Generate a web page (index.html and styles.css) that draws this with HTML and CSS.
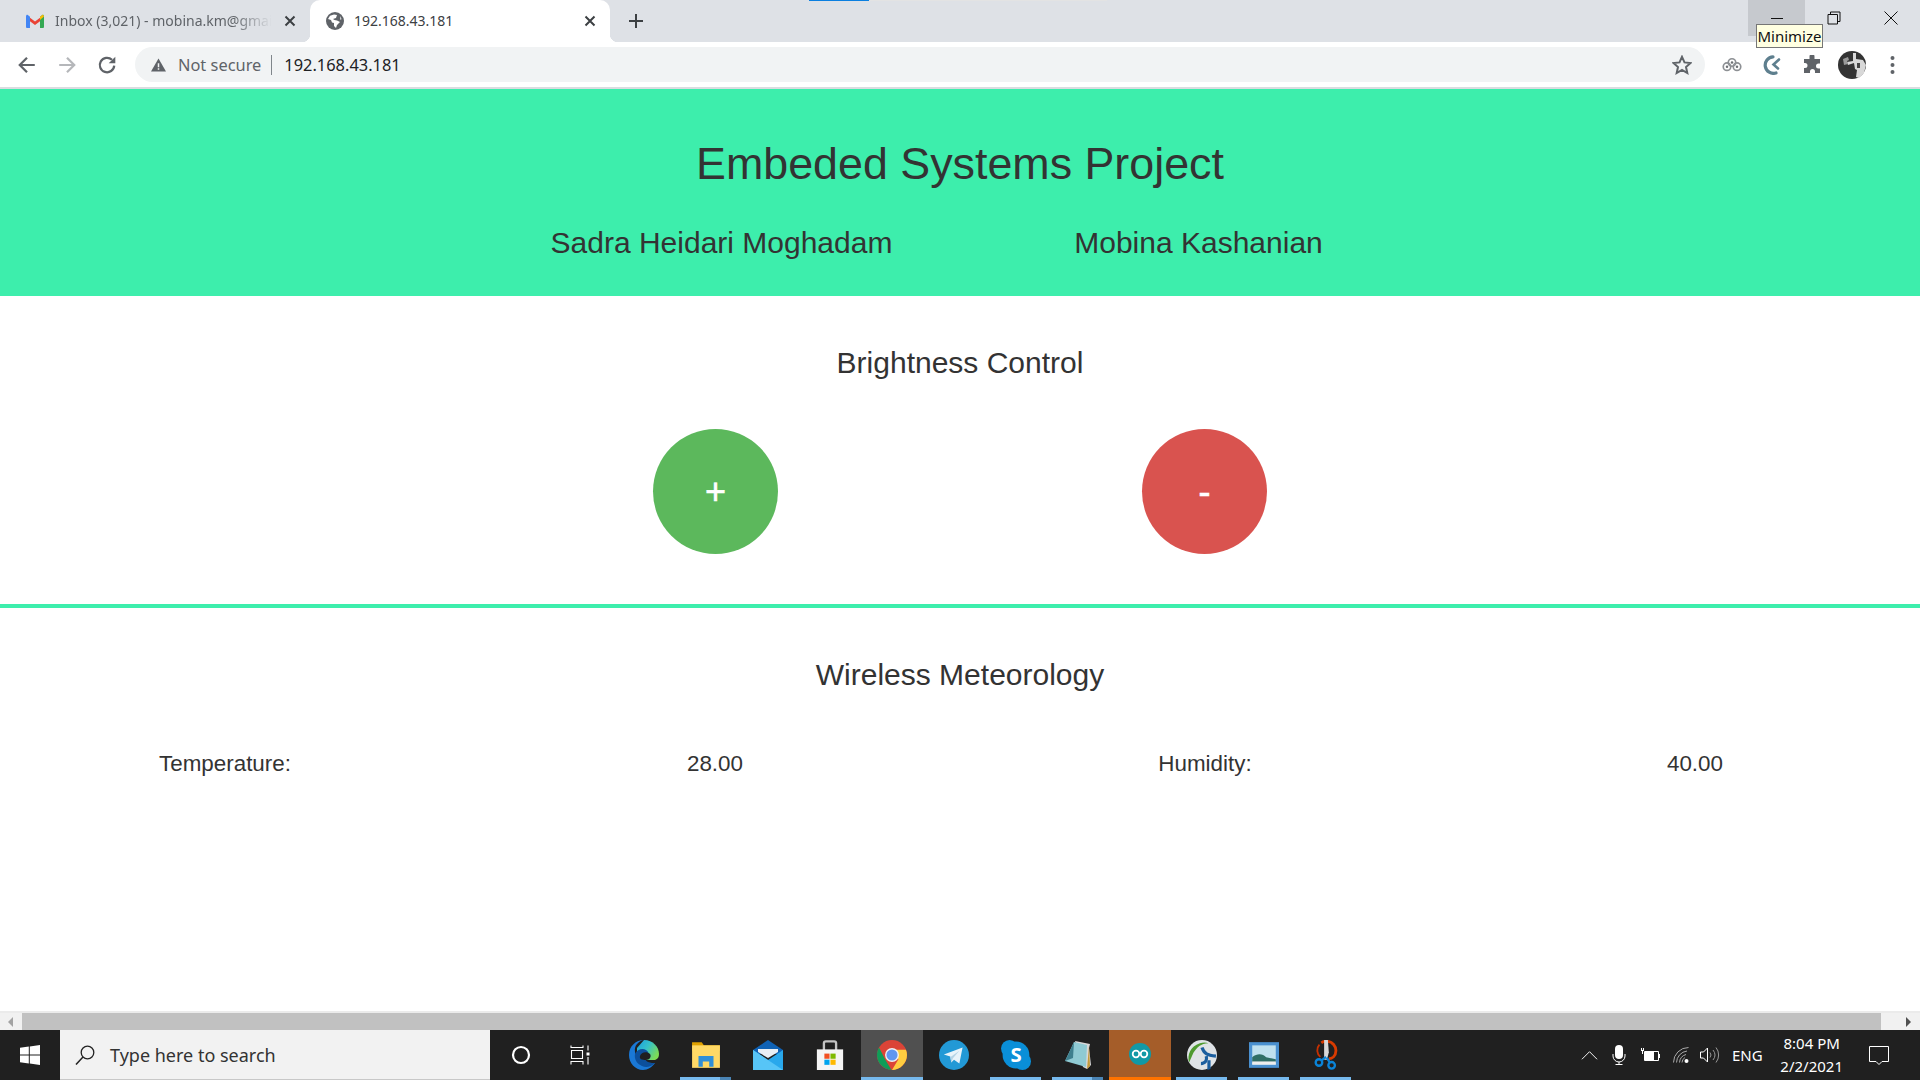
FILE: index.html
```html
<!DOCTYPE html>
<html lang="en">
<head>
    <meta charset="UTF-8">
    <title>192.168.43.181</title>
    <link rel="stylesheet" href="styles.css">
</head>
<body>
<div class="tabstrip">
    <div class="loadbar"><span></span></div>
    <div class="tab">
        <svg class="favicon" viewBox="0 0 18 14"><path fill="#ea4335" d="M1 1.500 9 7.500l8-6V5l-8 6-8-6z"/><path fill="#4285f4" d="M0 2.500C0 1 1 .5 1.500.8L4 2.700V14H1.300C.5 14 0 13.400 0 12.700z"/><path fill="#34a853" d="M14 2.700 16.500.8C17 .5 18 1 18 2.500v10.200c0 .7-.5 1.300-1.300 1.300H14z"/><path fill="#fbbc04" d="M14 2.700 17 .5 18 2.500 14 6z"/></svg>
        <span class="tab-title fade">Inbox (3,021) - mobina.km@gmail.com</span>
        <svg class="tab-x" viewBox="0 0 12 12"><path d="M1.500 1.500l9 9M10.500 1.500l-9 9"/></svg>
    </div>
    <div class="tab active">
        <svg class="favicon" viewBox="0 0 18 18"><circle cx="9" cy="9" r="9" fill="#5f6368"/><path fill="#fff" d="M8 2.500 4 3.800 2 7l3 1 1 2.500 2 .5V14l2 2 1-3 3-3-3-1.500-2.500-.5L7 7l3-1 1-3zM14 4l1.500 3-1 1z"/></svg>
        <span class="tab-title">192.168.43.181</span>
        <svg class="tab-x" viewBox="0 0 12 12"><path d="M1.500 1.500l9 9M10.500 1.500l-9 9"/></svg>
    </div>
    <svg class="newtab" viewBox="0 0 16 16"><path d="M8 1v14M1 8h14"/></svg>
    <div class="winctl">
        <div class="winbtn hover"><svg viewBox="0 0 14 14"><path d="M1 7.500h12"/></svg></div>
        <div class="winbtn"><svg viewBox="0 0 14 14"><path d="M1 3.500h9.500V13H1zM3.500 3.500V1H13v9.500h-2.500"/></svg></div>
        <div class="winbtn"><svg viewBox="0 0 14 14"><path d="M.5.500l13 13M13.500.500l-13 13"/></svg></div>
    </div>
    <div class="tooltip">Minimize</div>
</div>

<div class="toolbar">
    <div class="tool"><svg viewBox="0 0 18 18"><path class="st" d="M16 9H3M9 2.500 2.500 9 9 15.500"/></svg></div>
    <div class="tool dim"><svg viewBox="0 0 18 18"><path class="st" d="M2 9h13M9 2.500 15.500 9 9 15.500"/></svg></div>
    <div class="tool"><svg viewBox="0 0 18 18"><path class="st" d="M15.500 9.500A6.500 6.500 0 1 1 13.500 4.300"/><path fill="#5f6368" d="M16.500 1.500V7.500H10.500z"/></svg></div>
    <div class="omnibox">
        <svg class="warn" viewBox="0 0 16 14"><path fill="#5f6368" d="M8 0l8 14H0z"/><path fill="#f1f3f4" d="M7.200 5h1.600v4.500H7.200zM7.200 10.500h1.600V12H7.200z"/></svg>
        <span class="secure">Not secure</span>
        <span class="sep"></span>
        <span class="url">192.168.43.181</span>
        <svg class="star" viewBox="0 0 20 20"><path d="M10 1.800l2.500 5.600 6 .6-4.500 4 1.300 6L10 15l-5.300 3 1.300-6-4.500-4 6-.6z"/></svg>
    </div>
    <div class="tool"><svg viewBox="0 0 24 20"><g fill="none" stroke="#8d9094" stroke-width="2"><circle cx="6" cy="12" r="4.500"/><circle cx="12" cy="7" r="4.500"/><circle cx="18" cy="12" r="4.500"/></g><g fill="#6d7074"><circle cx="6" cy="12" r="1.500"/><circle cx="12" cy="7" r="1.500"/><circle cx="18" cy="12" r="1.500"/></g></svg></div>
    <div class="tool"><svg viewBox="0 0 20 20"><path fill="none" stroke="#5e7f8e" stroke-width="3.200" stroke-linecap="round" d="M11 1.800A8.300 8.300 0 1 0 14 18"/><path fill="none" stroke="#5e7f8e" stroke-width="2.600" stroke-linecap="round" d="M17 4.500 11.500 9.500 16 13.500"/></svg></div>
    <div class="tool"><svg viewBox="0 0 20 20"><path fill="#5f6368" d="M7.500 1.500a2.500 2.500 0 0 1 5 0V4H18v4.500h-1.500a2.500 2.500 0 0 0 0 5H18V18h-5v-1.500a2.500 2.500 0 0 0-5 0V18H2v-5h1a2.500 2.500 0 0 0 0-5H2V4h5.500z"/></svg></div>
    <div class="tool"><svg class="avatar" viewBox="0 0 28 28"><circle cx="14" cy="14" r="14" fill="#333"/><path fill="#d8d8d8" d="M15 2h3v6l7 1 3 5-2 8-5 5-3-1 1-7-2-1-1-6-6 2-1-3 6-1z"/><path fill="#999" d="M5 8l5-2 1 3-2 1 1 3-4 1z"/><path fill="#444" d="M19 12h3v5h-3z"/></svg></div>
    <div class="tool"><svg class="kebab" viewBox="0 0 4 18"><circle cx="2" cy="2" r="2"/><circle cx="2" cy="9" r="2"/><circle cx="2" cy="16" r="2"/></svg></div>
</div>

<main class="page">
    <header class="banner">
        <h1>Embeded Systems Project</h1>
        <div class="authors">
            <span>Sadra Heidari Moghadam</span>
            <span>Mobina Kashanian</span>
        </div>
    </header>
    <section class="brightness">
        <h2>Brightness Control</h2>
        <div class="buttons">
            <button class="round plus">+</button>
            <button class="round minus">-</button>
        </div>
    </section>
    <section class="weather">
        <h2>Wireless Meteorology</h2>
        <div class="readings">
            <span>Temperature:</span>
            <span>28.00</span>
            <span>Humidity:</span>
            <span>40.00</span>
        </div>
    </section>
</main>

<div class="scrollbar">
    <span class="arrow left"></span>
    <span class="thumb"></span>
    <span class="arrow right"></span>
</div>

<footer class="taskbar">
    <div class="start"><svg viewBox="0 0 20 20"><path fill="#fff" d="M0 2.800 8.800 1.600V9.500H0zM9.800 1.500 20 0V9.500H9.800zM0 10.500H8.800V18.400L0 17.200zM9.800 10.500H20V20L9.800 18.500z"/></svg></div>
    <div class="search">
        <svg viewBox="0 0 20 20"><circle cx="12.500" cy="7.500" r="6.300" fill="none" stroke="#222" stroke-width="1.300"/><path d="M8 12 1 19.500" stroke="#222" stroke-width="1.500"/></svg>
        <span>Type here to search</span>
    </div>
    <div class="task first"><svg class="i20" viewBox="0 0 20 20"><circle cx="10" cy="10" r="8" fill="none" stroke="#fff" stroke-width="2.200"/></svg></div>
    <div class="task"><svg class="i20 tv" viewBox="0 0 20 20"><path fill="none" stroke="#fff" stroke-width="1.100" d="M1 .5v2h12V.5M1.500 5.500h11v8h-11zM1 19.500v-3h12v3M18 .5v5M18 12v7.500"/><path fill="#fff" d="M16.500 7.500h3v3h-3z"/></svg></div>
    <div class="task"><svg viewBox="0 0 30 30"><defs><linearGradient id="eg" x1="0" y1="0" x2="1" y2=".6"><stop offset="0" stop-color="#1b9de2"/><stop offset=".5" stop-color="#35c1c9"/><stop offset="1" stop-color="#7ddc55"/></linearGradient></defs><path fill="url(#eg)" d="M15 0c9 0 15 7 15 14 0 3-1 5-4 6H8V8z"/><path fill="#1a78d6" d="M0 15C0 6 7 0 15 0 9 1 5 6 6 12c1 8 9 14 20 11-3 4-7 7-12 7C6 30 0 23 0 15z"/><path fill="#0c4f9c" d="M6 14c2-5 8-6 11-4 4 2 3 7 0 9-1 1 0 2 2 3 3 1 5 1 7 1-4 4-9 5-13 3-5-2-8-7-7-12z"/><path fill="#202020" d="M11 16c1-4 7-5 10-2 2 3-1 6-4 6-4 0-7-1-6-4z"/></svg></div>
    <div class="task run"><svg viewBox="0 0 28 26"><path fill="#e0a100" d="M1 1h9l2 3h15v5H1z"/><path fill="#ffd966" d="M1 4h26v21H1z"/><path fill="#2f8fd8" d="M7 24V14h14v10h-4v-5h-6v5z"/></svg><i class="more"></i></div>
    <div class="task"><svg viewBox="0 0 30 30"><path fill="#0f62b5" d="M15 0 30 10v4H0v-4z"/><path fill="#e8eef4" d="M5 9h20v3L15 18 5 12z"/><path fill="#29a8ec" d="M0 10l15 10 15-10v20H0z"/><path fill="#57c5f7" d="M0 10l15 10L30 30H0z"/></svg></div>
    <div class="task"><svg viewBox="0 0 30 32"><path fill="none" stroke="#c4c4c4" stroke-width="2.500" d="M8.500 12V3.500a2 2 0 0 1 2-2h9a2 2 0 0 1 2 2V12"/><path fill="#f5f5f5" d="M1 10h28v22H1z"/><path fill="#f25022" d="M9 14.500h5.500V20H9z"/><path fill="#7fba00" d="M15.500 14.500H21V20h-5.500z"/><path fill="#00a4ef" d="M9 21h5.500v5.500H9z"/><path fill="#ffb900" d="M15.500 21H21v5.500h-5.500z"/></svg></div>
    <div class="task run hover"><svg viewBox="0 0 28 28"><circle cx="14" cy="14" r="14" fill="#db4437"/><path fill="#0f9d58" d="M1.900 7 8 19l5.500 8.900C6 27.500 0 21.500 0 14c0-2.500.7-5 1.900-7z"/><path fill="#ffcd40" d="M14 9h13c.7 1.500 1 3.200 1 5 0 7.700-6.300 14-14 14l6-10z"/><circle cx="14" cy="14" r="6.500" fill="#f1f1f1"/><circle cx="14" cy="14" r="5.200" fill="#5f96f0"/></svg></div>
    <div class="task"><svg viewBox="0 0 28 28"><circle cx="14" cy="14" r="14" fill="#2299d6"/><path fill="#e8f3fa" d="M4.500 13.500 22 7l-3 15-5-3.500-2.500 2.500-1-5.500z"/><path fill="#b5d4e6" d="M10.500 16 19 10l-6 7-1.500 4z"/></svg></div>
    <div class="task run"><svg viewBox="0 0 28 28"><circle cx="8" cy="8" r="8" fill="#0a8fd8"/><circle cx="20" cy="20" r="8" fill="#0a8fd8"/><circle cx="14" cy="14" r="12.500" fill="#0a8fd8"/><text x="14" y="20.500" class="skype">S</text></svg></div>
    <div class="task run"><svg viewBox="0 0 28 30"><path fill="#d8d8d8" d="M11 1l15 3-1 4 2 17-4 4-4-2z"/><path fill="#c49a3a" d="M25 6l1 20-3 3z"/><path fill="#8fcad3" d="M10 2 23 5l-1 22L1 21z"/><path fill="#3e7f8e" d="M10 2 4 15 1 21l8-3z"/></svg><i class="more"></i></div>
    <div class="task arduino"><svg viewBox="0 0 22 22"><circle cx="11" cy="11" r="11" fill="#1199a6"/><g fill="none" stroke="#fff" stroke-width="1.800"><circle cx="7" cy="11" r="3.300"/><circle cx="15" cy="11" r="3.300"/></g></svg></div>
    <div class="task run"><svg viewBox="0 0 28 28"><circle cx="14" cy="14" r="14" fill="#dfe3e6"/><path fill="#4e9a2f" d="M2 21C0 14 3 6 12 3c3-1 6-1 8 0-7 0-11 4-14 9z"/><path fill="none" stroke="#1b5e9e" stroke-width="3" d="M14 7c2 6 5 7 13 8M13 22c4 0 6-3 5-7"/><path fill="#1b5e9e" d="M19 19h3v8l-3 1z"/></svg></div>
    <div class="task run"><svg viewBox="0 0 28 24"><path fill="#4a90cf" d="M0 0h28v24H0z"/><path fill="#bfe0ee" d="M3 3h22v18H3z"/><path fill="#2f6e66" d="M3 14c5-4 10-3 13 0l9 2v3H3z"/><path fill="#eee" d="M3 18h22v3H3z"/></svg></div>
    <div class="task run"><svg viewBox="0 0 26 32"><path fill="none" stroke="#d83b01" stroke-width="3" d="M8 3a10 10 0 0 1 13 15c-2 2-4 2-5 2"/><path fill="none" stroke="#c63000" stroke-width="2" d="M6 5a9 9 0 0 0 1 13"/><path fill="#d8d8d8" d="M11 0h4l1 13-2 8h-3z"/><g fill="none" stroke="#0a84d8" stroke-width="2.500"><circle cx="5.500" cy="24" r="3.500"/><circle cx="19" cy="27" r="3.500"/></g><path stroke="#0a84d8" stroke-width="2.500" d="M8 22l5-4M17 24l-3-5"/></svg></div>
    <div class="tray">
        <svg class="chev" viewBox="0 0 18 10"><path d="M1 9.500 9 1.500l8 8"/></svg>
        <svg class="mic" viewBox="0 0 14 20"><rect x="3" width="8" height="14" rx="4" fill="#fff"/><path fill="none" stroke="#fff" d="M1 9v2a6 6 0 0 0 12 0V9M7 17v3M3.500 19.500h7"/></svg>
        <svg class="batt" viewBox="0 0 20 14"><path fill="none" stroke="#fff" d="M4.500 3.500h14v9h-14z"/><path fill="#fff" d="M5 4h9v8H5zM19 6h1v4h-1zM1 0h1v2h1V0h1v3H3v3H2V3H1z"/></svg>
        <svg class="wifi" viewBox="0 0 16 16"><g fill="none" stroke="#aaa"><path d="M.5 15.500A15 15 0 0 1 15.500.5M3.500 15.500A12 12 0 0 1 14 4M6.500 15.500A9 9 0 0 1 13 7.500M9 15.500A6 6 0 0 1 12 10.500"/></g><circle cx="13.500" cy="14" r="2" fill="#fff"/></svg>
        <svg class="vol" viewBox="0 0 20 16"><path fill="none" stroke="#fff" d="M.5 5h3l4-4v14l-4-4h-3z"/><g fill="none" stroke="#999"><path d="M10 5.500a4 4 0 0 1 0 5M13 3a8 8 0 0 1 0 10M16 .5a12 12 0 0 1 0 15"/></g></svg>
        <span class="lang">ENG</span>
        <div class="clock"><span>8:04 PM</span><span>2/2/2021</span></div>
        <svg class="notif" viewBox="0 0 20 19"><path d="M.5.500h19v15h-6.500l-3 3-3-3H.5z"/></svg>
    </div>
</footer>
</body>
</html>
```

FILE: styles.css
```css
* {
    box-sizing: border-box;
}

html, body {
    height: 100%;
}

body {
    margin: 0;
    display: flex;
    flex-direction: column;
    overflow: hidden;
    background: #fff;
    font-family: "Noto Sans", sans-serif;
}

/* tabs row */
.tabstrip {
    position: relative;
    display: flex;
    flex: none;
    height: 42px;
    padding-left: 10px;
    align-items: center;
    background: #dee1e6;
}

.loadbar {
    position: absolute;
    top: 0;
    left: 809px;
    width: 298px;
    height: 1px;
    background: #e3e3e3;
}

.loadbar span {
    display: block;
    width: 60px;
    height: 1px;
    background: #0a7fe0;
}

.tab {
    position: relative;
    display: flex;
    align-items: center;
    width: 300px;
    height: 42px;
    padding: 0 14px 0 16px;
    font-size: 14px;
    color: #5f6368;
}

.tab.active {
    background: #fff;
    border-radius: 10px 10px 0 0;
    color: #3c4043;
}

.tab.active:before,
.tab.active:after {
    content: "";
    position: absolute;
    bottom: 0;
    width: 8px;
    height: 8px;
}

.tab.active:before {
    left: -8px;
    background: radial-gradient(circle at 0 0, #dee1e6 8px, #fff 8.500px);
}

.tab.active:after {
    right: -8px;
    background: radial-gradient(circle at 100% 0, #dee1e6 8px, #fff 8.500px);
}

.favicon {
    flex: none;
    width: 18px;
    height: 18px;
    margin-right: 11px;
}

.active .favicon {
    margin-right: 10px;
}

.tab-title {
    flex: 1;
    overflow: hidden;
    margin-bottom: 2px;
    white-space: nowrap;
}

.fade {
    -webkit-mask-image: linear-gradient(to right, #000 80%, transparent 98%);
    mask-image: linear-gradient(to right, #000 80%, transparent 98%);
}

.tab-x {
    flex: none;
    width: 12px;
    height: 12px;
    margin-left: 8px;
    fill: none;
    stroke: #3c4043;
    stroke-width: 2;
}

.newtab {
    width: 16px;
    height: 16px;
    margin-left: 18px;
    fill: none;
    stroke: #3c4043;
    stroke-width: 2;
}

.winctl {
    display: flex;
    align-self: flex-start;
    margin-left: auto;
    padding-right: 1px;
}

.winbtn {
    display: flex;
    align-items: center;
    justify-content: center;
    width: 57px;
    height: 36px;
}

.winbtn.hover {
    background: #c6c9ce;
}

.winbtn svg {
    width: 14px;
    height: 14px;
    fill: none;
    stroke: #111;
    stroke-width: 1;
}

.tooltip {
    position: absolute;
    top: 24px;
    left: 1756px;
    z-index: 5;
    width: 67px;
    height: 24px;
    border: 1px solid #767676;
    background: #ffffe1;
    font-size: 15px;
    line-height: 22px;
    text-align: center;
    color: #111;
    white-space: nowrap;
}

/* address bar row */
.toolbar {
    display: flex;
    flex: none;
    height: 47px;
    padding: 0 8px 0 7px;
    align-items: center;
    background: #fff;
    border-bottom: 2px solid #dadce0;
}

.tool {
    display: flex;
    flex: none;
    align-items: center;
    justify-content: center;
    width: 40px;
    height: 35px;
}

.tool svg {
    width: 20px;
    height: 20px;
}

.tool .avatar {
    width: 28px;
    height: 28px;
}

.tool .kebab {
    width: 5px;
    height: 18px;
    fill: #5f6368;
}

.tool .st {
    fill: none;
    stroke: #5f6368;
    stroke-width: 2;
}

.tool.dim .st {
    stroke: #b5b7ba;
}

.omnibox {
    display: flex;
    flex: 1;
    align-items: center;
    height: 35px;
    margin: 0 7px 0 8px;
    padding: 0 13px 0 16px;
    border-radius: 18px;
    background: #f1f3f4;
    font-size: 16.400px;
}

.warn {
    width: 15px;
    height: 14px;
    margin-right: 12px;
}

.secure {
    color: #5f6368;
}

.sep {
    width: 1px;
    height: 20px;
    margin: 0 12px 0 10px;
    background: #80868b;
}

.url {
    color: #202124;
}

.star {
    width: 20px;
    height: 20px;
    margin-left: auto;
    fill: none;
    stroke: #5f6368;
    stroke-width: 2;
}

/* the web page */
.page {
    flex: 1;
    overflow: hidden;
    font-family: "Liberation Sans", Arial, sans-serif;
    color: #333;
    text-align: center;
}

.banner {
    height: 207px;
    padding-top: 47px;
    background: #3deeac;
}

h1 {
    margin: 0;
    font-size: 44.800px;
    font-weight: 400;
    line-height: 54px;
}

.authors {
    display: grid;
    grid-template-columns: 477px 477px;
    justify-content: center;
    margin-top: 34px;
    font-size: 30px;
    line-height: 38px;
}

h2 {
    margin: 0;
    font-size: 30px;
    font-weight: 400;
    line-height: 38px;
}

.brightness {
    height: 312px;
    padding-top: 48px;
    border-bottom: 4px solid #3deeac;
}

.buttons {
    display: grid;
    grid-template-columns: 489px 489px;
    justify-content: center;
    justify-items: center;
    margin-top: 47px;
}

.round {
    width: 125px;
    height: 125px;
    padding: 0;
    border: 0;
    border-radius: 50%;
    font-family: inherit;
    font-size: 36px;
    color: #fff;
    -webkit-text-stroke: .6px #fff;
}

.plus {
    background: #5cb85c;
}

.minus {
    background: #d9534f;
}

.weather {
    padding-top: 48px;
}

.readings {
    display: grid;
    grid-template-columns: repeat(4, 490px);
    justify-content: center;
    margin-top: 54px;
    font-size: 22.400px;
    line-height: 32px;
}

/* horizontal scroll bar of the page */
.scrollbar {
    display: flex;
    flex: none;
    height: 19px;
    align-items: stretch;
    border-top: 2px solid #ebebeb;
    background: #f1f1f1;
}

.arrow {
    position: relative;
    flex: none;
    width: 22px;
}

.arrow:after {
    content: "";
    position: absolute;
    top: 4px;
    border: 5px solid transparent;
}

.arrow.left:after {
    left: 3px;
    border-right-color: #a3a3a3;
}

.arrow.right {
    width: 39px;
}

.arrow.right:after {
    right: 4px;
    border-left-color: #505050;
}

.thumb {
    flex: 1;
    background: #c1c1c1;
}

/* windows taskbar */
.taskbar {
    display: flex;
    flex: none;
    height: 50px;
    background: #202020;
}

.start {
    display: flex;
    align-items: center;
    justify-content: center;
    flex: none;
    width: 60px;
}

.start svg {
    width: 20px;
    height: 20px;
}

.search {
    display: flex;
    flex: none;
    align-items: center;
    width: 430px;
    padding-left: 15px;
    background: #f2f2f2;
    border-bottom: 1px solid #c8c8c8;
    font-size: 18px;
    color: #333;
}

.search svg {
    width: 20px;
    height: 20px;
    margin-right: 15px;
}

.task {
    position: relative;
    display: flex;
    flex: none;
    align-items: center;
    justify-content: center;
    width: 62px;
}

.task.first {
    width: 61px;
}

.task svg {
    width: 30px;
    height: 30px;
}

.task .i20 {
    width: 20px;
    height: 20px;
}

.task .tv {
    margin-right: 4px;
}

.task.run:after {
    content: "";
    position: absolute;
    left: 5px;
    right: 6px;
    bottom: 0;
    height: 3px;
    background: #76b9ed;
}

.task .more {
    position: absolute;
    right: 6px;
    bottom: 0;
    z-index: 1;
    width: 11px;
    height: 3px;
    background: #4a84b4;
}

.task.hover {
    background: #505050;
}

.task.hover:after {
    left: 0;
    right: 0;
}

.arduino {
    background: #a55d29;
    border-bottom: 3px solid #ff7300;
}

.arduino svg {
    width: 22px;
    height: 22px;
}

.tray {
    display: flex;
    align-items: center;
    flex: 1;
    padding-left: 224px;
    color: #fff;
    font-size: 15px;
}

.tray svg {
    flex: none;
}

.chev {
    width: 17px;
    height: 10px;
    fill: none;
    stroke: #fff;
    stroke-width: 1;
}

.mic {
    width: 14px;
    height: 20px;
    margin-left: 14px;
}

.batt {
    width: 20px;
    height: 14px;
    margin-left: 14px;
}

.wifi {
    width: 16px;
    height: 16px;
    margin-left: 13px;
}

.vol {
    width: 20px;
    height: 16px;
    margin-left: 11px;
}

.lang {
    margin-left: 12px;
}

.clock {
    display: flex;
    flex-direction: column;
    align-items: center;
    width: 80px;
    margin-left: 9px;
    line-height: 23px;
}

.notif {
    width: 20px;
    height: 19px;
    margin-left: 17px;
    fill: none;
    stroke: #fff;
}

.skype {
    font-family: "Open Sans", sans-serif;
    font-size: 19px;
    font-weight: 700;
    fill: #fff;
    text-anchor: middle;
}
```
